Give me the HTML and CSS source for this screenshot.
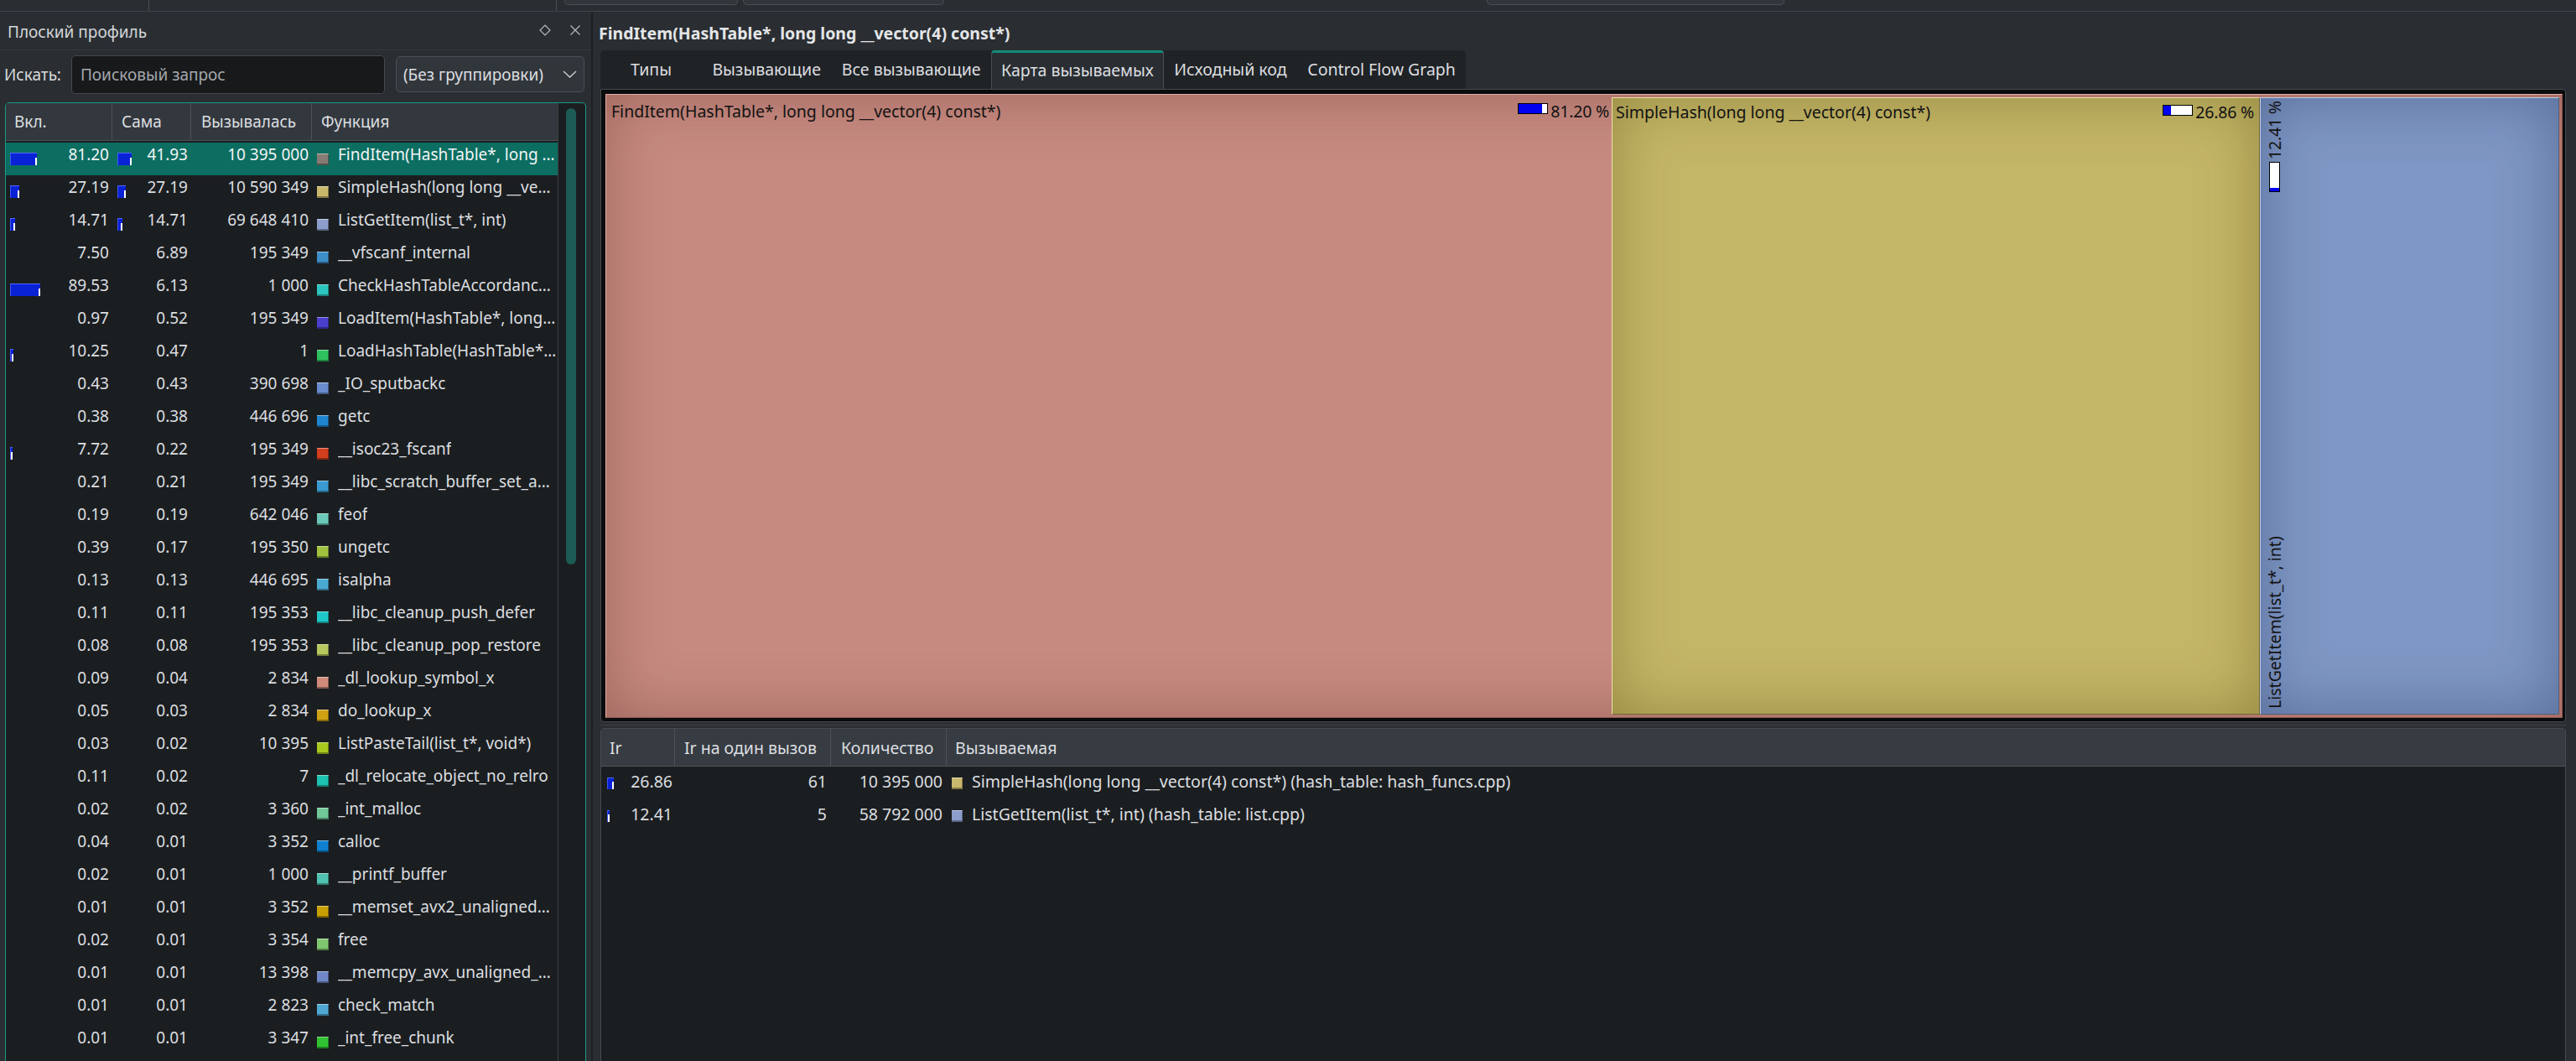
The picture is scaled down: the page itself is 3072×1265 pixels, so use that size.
FILE: index.html
```html
<!DOCTYPE html>
<html lang="ru">
<head>
<meta charset="utf-8">
<title>KCachegrind</title>
<link rel="stylesheet" href="styles.css">
</head>
<body>
<div class="app">
  <div class="topstrip">
    <div class="ts-gap g1"></div><div class="ts-vl"></div>
    <div class="ts-gap g2"></div><div class="ts-vl"></div>
    <div class="ts-gap g3"></div><div class="ts-box tsb1"></div>
    <div class="ts-gap g4"></div><div class="ts-box tsb2"></div>
    <div class="ts-gap g5"></div><div class="ts-box tsb3"></div>
  </div>
  <div class="main">
    <aside class="dock">
      <div class="dock-title">
        <span class="dock-name">Плоский профиль</span>
        <span class="dock-icons">
          <svg width="14" height="14" viewBox="0 0 14 14"><path d="M7 1 L13 7 L7 13 L1 7 Z" fill="none" stroke="#b4b7bb" stroke-width="1.2"/></svg>
          <svg width="14" height="14" viewBox="0 0 14 14"><path d="M1.5 1.5 L12.5 12.5 M12.5 1.5 L1.5 12.5" fill="none" stroke="#b4b7bb" stroke-width="1.2"/></svg>
        </span>
      </div>
      <div class="search">
        <label class="search-label">Искать:</label>
        <div class="search-input">Поисковый запрос</div>
        <div class="combo"><span>(Без группировки)</span>
          <svg width="17" height="9" viewBox="0 0 17 9"><path d="M1 1 L8.5 8 L16 1" fill="none" stroke="#d0d2d4" stroke-width="1.3"/></svg>
        </div>
      </div>
      <div class="tframe">
        <div class="tbl">
          <div class="thead">
            <div class="th">Вкл.</div><div class="th">Сама</div><div class="th">Вызывалась</div><div class="th last">Функция</div>
          </div>
          <div class="tbody">
            <div class="row sel"><div class="c1"><i class="bar" style="width:32px"></i><span class="num">81.20</span></div><div class="c2"><i class="bar" style="width:17px"></i><span class="num">41.93</span></div><div class="c3">10 395 000</div><div class="c4"><i class="sq" style="background:#867c73"></i><span class="fn">FindItem(HashTable*, long …</span></div></div>
            <div class="row"><div class="c1"><i class="bar" style="width:11px"></i><span class="num">27.19</span></div><div class="c2"><i class="bar" style="width:10px"></i><span class="num">27.19</span></div><div class="c3">10 590 349</div><div class="c4"><i class="sq" style="background:#c9b96c"></i><span class="fn">SimpleHash(long long __ve…</span></div></div>
            <div class="row"><div class="c1"><i class="bar" style="width:6px"></i><span class="num">14.71</span></div><div class="c2"><i class="bar" style="width:6px"></i><span class="num">14.71</span></div><div class="c3">69 648 410</div><div class="c4"><i class="sq" style="background:#8d9dcc"></i><span class="fn">ListGetItem(list_t*, int)</span></div></div>
            <div class="row"><div class="c1"><span class="num">7.50</span></div><div class="c2"><span class="num">6.89</span></div><div class="c3">195 349</div><div class="c4"><i class="sq" style="background:#3c8ec8"></i><span class="fn">__vfscanf_internal</span></div></div>
            <div class="row"><div class="c1"><i class="bar" style="width:36px"></i><span class="num">89.53</span></div><div class="c2"><span class="num">6.13</span></div><div class="c3">1 000</div><div class="c4"><i class="sq" style="background:#2cc6c0"></i><span class="fn">CheckHashTableAccordanc…</span></div></div>
            <div class="row"><div class="c1"><span class="num">0.97</span></div><div class="c2"><span class="num">0.52</span></div><div class="c3">195 349</div><div class="c4"><i class="sq" style="background:#4a3ecc"></i><span class="fn">LoadItem(HashTable*, long…</span></div></div>
            <div class="row"><div class="c1"><i class="bar" style="width:4px"></i><span class="num">10.25</span></div><div class="c2"><span class="num">0.47</span></div><div class="c3">1</div><div class="c4"><i class="sq" style="background:#2ec25e"></i><span class="fn">LoadHashTable(HashTable*…</span></div></div>
            <div class="row"><div class="c1"><span class="num">0.43</span></div><div class="c2"><span class="num">0.43</span></div><div class="c3">390 698</div><div class="c4"><i class="sq" style="background:#6a8ccf"></i><span class="fn">_IO_sputbackc</span></div></div>
            <div class="row"><div class="c1"><span class="num">0.38</span></div><div class="c2"><span class="num">0.38</span></div><div class="c3">446 696</div><div class="c4"><i class="sq" style="background:#1e86d0"></i><span class="fn">getc</span></div></div>
            <div class="row"><div class="c1"><i class="bar" style="width:3px"></i><span class="num">7.72</span></div><div class="c2"><span class="num">0.22</span></div><div class="c3">195 349</div><div class="c4"><i class="sq" style="background:#d23e1e"></i><span class="fn">__isoc23_fscanf</span></div></div>
            <div class="row"><div class="c1"><span class="num">0.21</span></div><div class="c2"><span class="num">0.21</span></div><div class="c3">195 349</div><div class="c4"><i class="sq" style="background:#3a9ad2"></i><span class="fn">__libc_scratch_buffer_set_a…</span></div></div>
            <div class="row"><div class="c1"><span class="num">0.19</span></div><div class="c2"><span class="num">0.19</span></div><div class="c3">642 046</div><div class="c4"><i class="sq" style="background:#6cc8b8"></i><span class="fn">feof</span></div></div>
            <div class="row"><div class="c1"><span class="num">0.39</span></div><div class="c2"><span class="num">0.17</span></div><div class="c3">195 350</div><div class="c4"><i class="sq" style="background:#a0c23e"></i><span class="fn">ungetc</span></div></div>
            <div class="row"><div class="c1"><span class="num">0.13</span></div><div class="c2"><span class="num">0.13</span></div><div class="c3">446 695</div><div class="c4"><i class="sq" style="background:#4aaad2"></i><span class="fn">isalpha</span></div></div>
            <div class="row"><div class="c1"><span class="num">0.11</span></div><div class="c2"><span class="num">0.11</span></div><div class="c3">195 353</div><div class="c4"><i class="sq" style="background:#1ec8c8"></i><span class="fn">__libc_cleanup_push_defer</span></div></div>
            <div class="row"><div class="c1"><span class="num">0.08</span></div><div class="c2"><span class="num">0.08</span></div><div class="c3">195 353</div><div class="c4"><i class="sq" style="background:#b6c85e"></i><span class="fn">__libc_cleanup_pop_restore</span></div></div>
            <div class="row"><div class="c1"><span class="num">0.09</span></div><div class="c2"><span class="num">0.04</span></div><div class="c3">2 834</div><div class="c4"><i class="sq" style="background:#d08a7a"></i><span class="fn">_dl_lookup_symbol_x</span></div></div>
            <div class="row"><div class="c1"><span class="num">0.05</span></div><div class="c2"><span class="num">0.03</span></div><div class="c3">2 834</div><div class="c4"><i class="sq" style="background:#d0a212"></i><span class="fn">do_lookup_x</span></div></div>
            <div class="row"><div class="c1"><span class="num">0.03</span></div><div class="c2"><span class="num">0.02</span></div><div class="c3">10 395</div><div class="c4"><i class="sq" style="background:#a8ca1e"></i><span class="fn">ListPasteTail(list_t*, void*)</span></div></div>
            <div class="row"><div class="c1"><span class="num">0.11</span></div><div class="c2"><span class="num">0.02</span></div><div class="c3">7</div><div class="c4"><i class="sq" style="background:#1ec2b0"></i><span class="fn">_dl_relocate_object_no_relro</span></div></div>
            <div class="row"><div class="c1"><span class="num">0.02</span></div><div class="c2"><span class="num">0.02</span></div><div class="c3">3 360</div><div class="c4"><i class="sq" style="background:#70c898"></i><span class="fn">_int_malloc</span></div></div>
            <div class="row"><div class="c1"><span class="num">0.04</span></div><div class="c2"><span class="num">0.01</span></div><div class="c3">3 352</div><div class="c4"><i class="sq" style="background:#0e80d0"></i><span class="fn">calloc</span></div></div>
            <div class="row"><div class="c1"><span class="num">0.02</span></div><div class="c2"><span class="num">0.01</span></div><div class="c3">1 000</div><div class="c4"><i class="sq" style="background:#50c2b2"></i><span class="fn">__printf_buffer</span></div></div>
            <div class="row"><div class="c1"><span class="num">0.01</span></div><div class="c2"><span class="num">0.01</span></div><div class="c3">3 352</div><div class="c4"><i class="sq" style="background:#c8a000"></i><span class="fn">__memset_avx2_unaligned…</span></div></div>
            <div class="row"><div class="c1"><span class="num">0.02</span></div><div class="c2"><span class="num">0.01</span></div><div class="c3">3 354</div><div class="c4"><i class="sq" style="background:#80c870"></i><span class="fn">free</span></div></div>
            <div class="row"><div class="c1"><span class="num">0.01</span></div><div class="c2"><span class="num">0.01</span></div><div class="c3">13 398</div><div class="c4"><i class="sq" style="background:#7088c8"></i><span class="fn">__memcpy_avx_unaligned_…</span></div></div>
            <div class="row"><div class="c1"><span class="num">0.01</span></div><div class="c2"><span class="num">0.01</span></div><div class="c3">2 823</div><div class="c4"><i class="sq" style="background:#50a8d2"></i><span class="fn">check_match</span></div></div>
            <div class="row"><div class="c1"><span class="num">0.01</span></div><div class="c2"><span class="num">0.01</span></div><div class="c3">3 347</div><div class="c4"><i class="sq" style="background:#30c232"></i><span class="fn">_int_free_chunk</span></div></div>
          </div>
        </div>
        <div class="vscroll"><div class="vhandle"></div></div>
      </div>
    </aside>
    <div class="vsep"></div>
    <section class="right">
      <div class="rtitle">FindItem(HashTable*, long long __vector(4) const*)</div>
      <div class="tabbar">
        <div class="tab first">Типы</div>
        <div class="tab">Вызывающие</div>
        <div class="tab">Все вызывающие</div>
        <div class="tab active">Карта вызываемых</div>
        <div class="tab">Исходный код</div>
        <div class="tab">Control Flow Graph</div>
      </div>
      <div class="mapframe">
        <div class="tm tm-find">
          <div class="tm-own">
            <span class="tm-name">FindItem(HashTable*, long long __vector(4) const*)</span>
            <i class="pbar" style="background:linear-gradient(to right,#0000f0 81.2%,#fff 81.2%)"></i>
            <span class="tm-pct">81.20 %</span>
          </div>
          <div class="tm-kids">
            <div class="tm tm-hash">
              <div class="tm-own">
                <span class="tm-name">SimpleHash(long long __vector(4) const*)</span>
                <i class="pbar" style="background:linear-gradient(to right,#0000f0 26.86%,#fff 26.86%)"></i>
                <span class="tm-pct">26.86 %</span>
              </div>
            </div>
            <div class="tm tm-list">
              <div class="tm-vlabel">
                <span class="tm-name">ListGetItem(list_t*, int)</span>
                <i class="pbar v" style="background:linear-gradient(to bottom,#0000f0 12.41%,#fff 12.41%)"></i>
                <span class="tm-pct">12.41 %</span>
              </div>
            </div>
          </div>
        </div>
      </div>
      <div class="hsplit"></div>
      <div class="bpanel">
        <div class="bhead">
          <div class="th">Ir</div><div class="th">Ir на один вызов</div><div class="th">Количество</div><div class="th last">Вызываемая</div>
        </div>
        <div class="brow"><div class="bc1"><i class="bar" style="width:8px"></i><span class="num">26.86</span></div><div class="bc2">61</div><div class="bc3">10 395 000</div><div class="bc4"><i class="sq" style="background:#c9b96c"></i><span class="fn">SimpleHash(long long __vector(4) const*) (hash_table: hash_funcs.cpp)</span></div></div>
        <div class="brow"><div class="bc1"><i class="bar" style="width:3px"></i><span class="num">12.41</span></div><div class="bc2">5</div><div class="bc3">58 792 000</div><div class="bc4"><i class="sq" style="background:#8d9dcc"></i><span class="fn">ListGetItem(list_t*, int) (hash_table: list.cpp)</span></div></div>
      </div>
    </section>
  </div>
</div>
</body>
</html>
```

FILE: styles.css
```css
* { box-sizing: border-box; margin: 0; padding: 0; }
html, body { width: 3072px; height: 1265px; overflow: hidden; }
body {
  background: #2a2e32;
  font-family: "Noto Sans", "DejaVu Sans", sans-serif;
  font-size: 19px;
  color: #dcdee0;
}
i { display: block; font-style: normal; }

.app { display: flex; flex-direction: column; height: 1265px; }

/* top strip (bottom edge of the toolbar) */
.topstrip { height: 14px; flex: none; display: flex; align-items: flex-start; border-bottom: 1px solid #3f444a; }
.ts-vl { width: 1px; height: 13px; background: #4a4f55; flex: none; }
.ts-gap { flex: none; }
.g1 { width: 177px; }
.g2 { width: 485px; }
.g3 { width: 9px; }
.g4 { width: 6px; }
.g5 { width: 647px; }
.ts-box { height: 6px; flex: none; background: #31363b; border: 1px solid #4a4f55; border-top: none; border-radius: 0 0 5px 5px; }
.tsb1 { width: 207px; }
.tsb2 { width: 240px; }
.tsb3 { width: 355px; }

.main { flex: 1; display: flex; min-height: 0; }

/* ---------- left dock ---------- */
.dock { width: 705px; flex: none; display: flex; flex-direction: column; min-height: 0; font-size: 19px; }
.dock-title {
  height: 46px; flex: none; display: flex; align-items: center; justify-content: space-between;
  padding: 2px 12px 0 9px; border-bottom: 1px solid #33383d; color: #d4d6d9;
}
.dock-icons { display: flex; gap: 22px; align-items: center; margin-top: -3px; }
.dock-icons svg { display: block; }

.search { height: 62px; flex: none; display: flex; align-items: flex-start; padding: 6px 0 0 5px; }
.search-label { line-height: 46px; height: 46px; color: #d8dadc; }
.search-input {
  margin-left: 12px; width: 374px; height: 46px; line-height: 44px; padding-left: 10px;
  background: #17191b; border: 1px solid #44494f; border-radius: 5px; color: #a4a8ac;
}
.combo {
  margin: 1px 0 0 13px; width: 225px; height: 43px; display: flex; align-items: center; justify-content: space-between;
  padding: 0 8px 0 8px; background: #31363b; border: 1px solid #4a5056; border-radius: 5px; color: #dcdee0;
}
.combo svg { display: block; }

.tframe {
  flex: 1; margin: 0 6px -12px 6px; display: flex; min-height: 0;
  border: 1px solid #1a9985; border-radius: 5px; background: #1b1e20; overflow: hidden;
}
.tbl { width: 659px; flex: none; border-right: 1px solid #3a3f44; }
.thead {
  height: 45px; display: grid; grid-template-columns: 127px 94px 144px 1fr;
  background: #33383e; border-bottom: 1px solid #4b5157;
}
.th { padding: 6px 0 0 10px; line-height: 32px; border-right: 1px solid #4b5157; white-space: nowrap; color: #dcdee0; }
.thead .th:nth-child(2) { padding-left: 11px; }
.thead .th:nth-child(3) { padding-left: 12px; }
.thead .th:nth-child(4) { padding-left: 11px; }
.th.last { border-right: none; }
.tbody { padding-top: 2px; }
.row { height: 39px; display: grid; grid-template-columns: 127px 94px 144px 1fr; }
.row.sel { background: #0b6e61; color: #f2f4f5; }
.row > div { display: flex; align-items: flex-start; line-height: 29px; white-space: nowrap; overflow: hidden; }
.c1 { padding: 0 4px 0 5px; }
.c2 { padding: 0 4px 0 6px; }
.c3 { justify-content: flex-end; padding-right: 4px; }
.num { margin-left: auto; }

.bar {
  position: relative; height: 15px; margin-top: 12px; flex: none;
  background: #0a22d6; border-top: 1px solid #4f66ff; border-left: 1px solid #3f56f0;
}
.bar::after { content: ""; position: absolute; right: 0; bottom: 0; width: 2px; height: 9px; background: #fff; }

.sq {
  width: 14px; height: 14px; flex: none; margin: 13px 0 0 6px;
  box-shadow: inset 0 1px 0 rgba(255,255,255,.45), inset -1px -2px 0 rgba(0,0,0,.35);
}
.fn { margin-left: 11px; overflow: hidden; }

.vscroll { flex: 1; padding: 6px 11px 0 9px; }
.vhandle { width: 12px; height: 544px; border-radius: 6px; background: #1d5b55; }

.vsep { width: 2px; flex: none; background: #1d2023; }

/* ---------- right side ---------- */
.right { flex: 1; min-width: 0; display: flex; flex-direction: column; padding-right: 12px; font-size: 19.5px; }
.rtitle { height: 46px; flex: none; padding: 4px 0 0 7px; display: flex; align-items: center; font-weight: 700; color: #e4e6e8; }

.tabbar {
  flex: none; align-self: flex-start; margin-left: 9px; height: 46px; display: flex;
  background: #202326; border-radius: 5px 5px 0 0;
}
.tab { padding: 0 12.4px; line-height: 46px; white-space: nowrap; color: #dcdee0; }
.tab.first { width: 121px; text-align: center; padding: 0; }
.tab.active {
  padding: 0 11px; line-height: 42px; background: #2a2e32; border-top: 3px solid #148b79;
  border-left: 1px solid #4a4f55; border-right: 1px solid #4a4f55; border-radius: 4px 4px 0 0;
}

.mapframe {
  flex: none; height: 755px; margin-left: 9px; display: flex;
  border: 1px solid #464b51; border-radius: 0 4px 4px 4px; background: #0a0b0c;
  padding: 5px 3px 4px 5px;
}
.tm { display: flex; color: #121212; }
.tm-find {
  flex: 1; background: #c68a81;
  border: 1px solid; border-color: #e2aea6 #8c5a52 #8c5a52 #e2aea6;
  box-shadow: inset 0 0 70px rgba(90,35,25,.36);
}
.tm-own { flex: 1; display: flex; align-items: flex-start; padding: 8px 3px 0 6px; line-height: 24px; white-space: nowrap; min-width: 0; }
.tm-name { margin-inline-end: auto; }
.pbar { width: 36px; height: 13px; margin: 2px 3px 0 0; border: 1px solid #000; flex: none; }
.tm-pct { letter-spacing: -0.2px; }
.tm-kids { width: 1130px; flex: none; display: flex; margin: 3px 3px 3px 0; }
.tm-hash {
  width: 773px; flex: none; background: #c4b667;
  border: 1px solid; border-color: #ece3a0 #6e6636 #6e6636 #ece3a0;
  box-shadow: inset 0 0 70px rgba(70,60,0,.36);
}
.tm-hash .tm-own { padding: 5px 6px 0 4px; }
.tm-hash .pbar { margin-top: 3px; }
.tm-list {
  flex: 1; background: #7f97c4; align-items: stretch;
  border: 1px solid; border-color: #bccbe8 #4e5e7c #4e5e7c #bccbe8;
  box-shadow: inset 0 0 70px rgba(20,35,80,.36);
}
.tm-vlabel {
  writing-mode: vertical-rl; transform: rotate(180deg);
  display: flex; align-items: center; line-height: 24px; white-space: nowrap;
  margin-left: 5px; padding: 6px 0 3px 0;
}
.pbar.v { width: 13px; height: 36px; margin: 0 0 3px 0; }

.hsplit { height: 7px; flex: none; margin-left: 9px; background: linear-gradient(transparent 3px, #3d4248 3px, #3d4248 4px, transparent 4px); }

.bpanel {
  flex: 1; margin: 0 0 -12px 9px; background: #1b1e20;
  border: 1px solid #464b51; border-radius: 4px; overflow: hidden;
}
.bhead {
  height: 45px; display: grid; grid-template-columns: 88px 186px 138px 1fr;
  background: #373c42; border-bottom: 1px solid #4d5359;
}
.bhead .th { padding: 5px 0 0 10px; line-height: 36px; }
.bhead .th:nth-child(2) { padding-left: 11px; }
.bhead .th:nth-child(3) { padding-left: 12px; }
.bhead .th:nth-child(4) { padding-left: 10px; }
.brow { height: 39px; display: grid; grid-template-columns: 88px 186px 138px 1fr; }
.brow > div { display: flex; align-items: flex-start; padding-top: 5px; line-height: 26px; white-space: nowrap; overflow: hidden; }
.brow .bar { margin-top: 8px; height: 14px; }
.bc1 { padding-left: 7px; padding-right: 3px; }
.bc2, .bc3 { justify-content: flex-end; padding-right: 5px; }
.bc4 .sq { width: 13px; margin: 8px 0 0 6px; }
```
